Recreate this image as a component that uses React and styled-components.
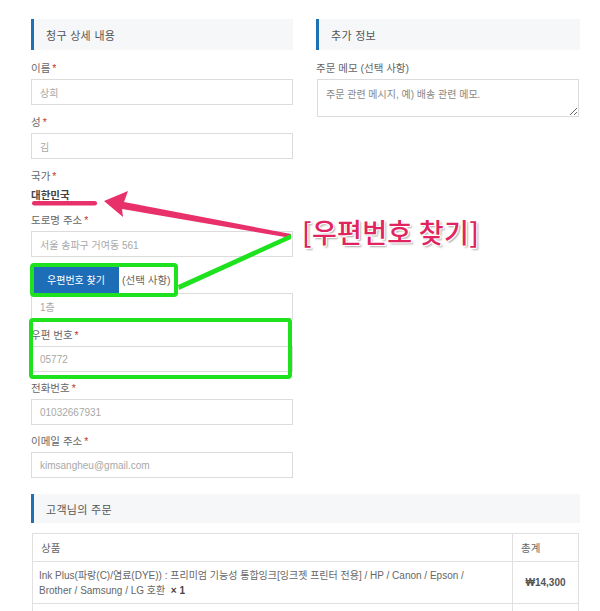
import React from "react";
import styled, { createGlobalStyle } from "styled-components";

const GlobalStyle = createGlobalStyle`
  html, body { margin: 0; padding: 0; background: #fff; }
  body { font-family: "Liberation Sans", "Noto Sans CJK KR", sans-serif; }
  * { box-sizing: border-box; }
`;

const Page = styled.div`
  position: relative;
  width: 600px;
  height: 611px;
  overflow: hidden;
  padding: 19px 20px 0 31px;
  background: #fff;
`;

const Columns = styled.div`
  display: grid;
  grid-template-columns: 262px 264px;
  column-gap: 23px;
  align-items: start;
`;

const Column = styled.div`
  display: flex;
  flex-direction: column;
`;

const SectionTitle = styled.h3`
  margin: 0 0 ${(p) => p.$gap || 9}px;
  height: ${(p) => p.$h || 31}px;
  display: flex;
  align-items: center;
  padding-left: 12px;
  background: #f6f7f8;
  border-left: 3px solid #2070b4;
  font-size: 11px;
  font-weight: 400;
  color: #555;
  letter-spacing: 0.3px;
`;

const Field = styled.div`
  margin-bottom: ${(p) => (p.$mb ?? 8)}px;
`;

const Label = styled.div`
  font-size: 10.5px;
  line-height: 18px;
  color: #666;
  margin-bottom: 2px;
`;

const Req = styled.span`
  color: #c0392b;
  margin-left: 2px;
`;

const TextInput = styled.input`
  display: block;
  width: 100%;
  height: 26px;
  border: 1px solid #dcdcdc;
  padding: 0 8px;
  font: inherit;
  font-size: 10px;
  color: #a8a8a8;
  background: #fff;
  outline: none;
`;

const Memo = styled.textarea`
  display: block;
  width: 262px;
  height: 38px;
  margin-left: 1px;
  border: 1px solid #dcdcdc;
  padding: 6px 8px;
  font: inherit;
  font-size: 10px;
  color: #888;
  resize: vertical;
  outline: none;
  &::placeholder { color: #888; }
`;

const CountryValue = styled.div`
  font-size: 10.5px;
  line-height: 16px;
  font-weight: 700;
  color: #444;
`;

const PostcodeRow = styled.div`
  display: flex;
  align-items: stretch;
  height: 27px;
  margin-top: 9px;
`;

const FindButton = styled.button`
  border: none;
  background: #1e6eb7;
  color: #fff;
  font: inherit;
  font-size: 10px;
  padding: 0 14px 0 16px;
  cursor: pointer;
`;

const Optional = styled.span`
  display: flex;
  align-items: center;
  padding-left: 3px;
  font-size: 10.5px;
  color: #666;
`;

const OrderSection = styled.section`
  margin-top: 8px;
  width: 549px;
`;

const OrderTable = styled.table`
  width: 547px;
  margin-left: 1px;
  border-collapse: collapse;
  font-size: 10px;
  color: #666;
`;

const Th = styled.th`
  border: 1px solid #e0e0e0;
  height: 28px;
  padding: 0 8px;
  text-align: left;
  font-weight: 400;
  font-size: 10.5px;
  width: ${(p) => p.$w || "auto"};
`;

const Td = styled.td`
  border: 1px solid #e0e0e0;
  height: 42px;
  padding: 4px 6px;
  line-height: 15px;
  text-align: ${(p) => (p.$center ? "center" : "left")};
  font-weight: ${(p) => (p.$bold ? 700 : 400)};
  color: ${(p) => (p.$bold ? "#555" : "#666")};
`;

const ProductName = styled.span`
  display: block;
  max-width: 432px;
`;

const Qty = styled.strong`
  color: #444;
`;

const Overlay = styled.svg`
  position: absolute;
  left: 0;
  top: 0;
  pointer-events: none;
`;

const Callout = styled.span`
  position: absolute;
  left: 302px;
  top: 212px;
  font-family: "Noto Sans CJK KR", sans-serif;
  font-size: 27px;
  font-weight: 500;
  letter-spacing: 0.3px;
  color: #e0245f;
  text-shadow:
    -1px -1px 0 #fff, 1px -1px 0 #fff, -1px 1px 0 #fff, 1px 1px 0 #fff,
    2px 2px 2px rgba(0, 0, 0, 0.35);
  pointer-events: none;
  white-space: nowrap;
`;

function InputField({ label, value, mb }) {
  return (
    <Field $mb={mb}>
      <Label>
        {label}
        <Req>*</Req>
      </Label>
      <TextInput readOnly value={value} />
    </Field>
  );
}

export default function App() {
  return (
    <>
      <GlobalStyle />
      <Page>
        <Columns>
          <Column>
            <SectionTitle>청구 상세 내용</SectionTitle>
            <InputField label="이름" value="상희" />
            <InputField label="성" value="김" />
            <Field>
              <Label>
                국가<Req>*</Req>
              </Label>
              <CountryValue>대한민국</CountryValue>
            </Field>
            <InputField label="도로명 주소" value="서울 송파구 거여동 561" mb={0} />
            <PostcodeRow>
              <FindButton type="button">우편번호 찾기</FindButton>
              <Optional>(선택 사항)</Optional>
            </PostcodeRow>
            <Field $mb={7}>
              <TextInput readOnly value="1층" />
            </Field>
            <InputField label="우편 번호" value="05772" mb={7} />
            <InputField label="전화번호" value="01032667931" mb={7} />
            <InputField label="이메일 주소" value="kimsangheu@gmail.com" />
          </Column>
          <Column>
            <SectionTitle>추가 정보</SectionTitle>
            <Field>
              <Label>주문 메모 (선택 사항)</Label>
              <Memo placeholder="주문 관련 메시지, 예) 배송 관련 메모." />
            </Field>
          </Column>
        </Columns>

        <OrderSection>
          <SectionTitle $h={29} $gap={10}>고객님의 주문</SectionTitle>
          <OrderTable>
            <thead>
              <tr>
                <Th>상품</Th>
                <Th $w="66px">총계</Th>
              </tr>
            </thead>
            <tbody>
              <tr>
                <Td>
                  <ProductName>
                    Ink Plus(파랑(C)/염료(DYE)) : 프리미엄 기능성 통합잉크[잉크젯 프린터 전용] / HP / Canon / Epson / Brother / Samsung / LG 호환{"\u00a0\u00a0"}
                    <Qty>× 1</Qty>
                  </ProductName>
                </Td>
                <Td $center $bold>₩14,300</Td>
              </tr>
              <tr>
                <Td />
                <Td />
              </tr>
            </tbody>
          </OrderTable>
        </OrderSection>

        <Overlay width="600" height="611" viewBox="0 0 600 611">
          <rect x="32" y="201" width="65" height="4.5" rx="2.2" fill="#e8306b" />
          <polygon
            points="104,201 128,191 124,202 291,234 291,238 122,209 123,217"
            fill="#e8306b"
          />
          <polygon points="291,234 291,239 179,290 178,285" fill="#1fe21f" />
          <rect x="32" y="265" width="144" height="30" rx="2" fill="none" stroke="#1fe21f" strokeWidth="4" />
          <rect x="31" y="320" width="259" height="57" rx="2" fill="none" stroke="#1fe21f" strokeWidth="4" />
        </Overlay>
        <Callout>[우편번호 찾기]</Callout>
      </Page>
    </>
  );
}
